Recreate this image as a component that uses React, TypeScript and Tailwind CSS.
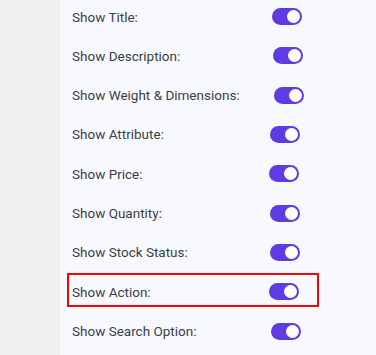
const rows = [
  { label: 'Show Title:', offset: 'ml-[3px]' },
  { label: 'Show Description:', offset: 'ml-[4px]' },
  { label: 'Show Weight & Dimensions:', offset: 'ml-[5px]' },
  { label: 'Show Attribute:', offset: 'ml-[1px]' },
  { label: 'Show Price:', offset: 'ml-0' },
  { label: 'Show Quantity:', offset: 'ml-[1px]' },
  { label: 'Show Stock Status:', offset: 'ml-[1px]' },
  { label: 'Show Action:', offset: 'ml-0', highlight: true },
  { label: 'Show Search Option:', offset: 'ml-[2px]' },
];

function Toggle({ className }: { className: string }) {
  return (
    <span className={`flex h-[17px] w-[30px] items-center justify-end rounded-full bg-[#5f3be2] pr-[2px] ${className}`}>
      <span className="h-[13px] w-[13px] rounded-full bg-white" />
    </span>
  );
}

export default function App() {
  return (
    <div className="flex h-[355px] w-[376px] overflow-hidden bg-[#f8f9ff] font-['Roboto',sans-serif]">
      <div className="w-[60px] shrink-0 bg-[#f0f0f1]" />
      <div className="mt-[-3px] flex flex-1 flex-col pl-3">
        {rows.map((row) => (
          <div key={row.label} className="relative flex h-[39.3px] shrink-0 items-center">
            {row.highlight && (
              <div className="absolute left-[-5px] top-[1px] h-[34px] w-[252px] border-2 border-[#ff0000]" />
            )}
            <span className="w-[197px] text-[13.5px] text-[#3a3f47]">{row.label}</span>
            <Toggle className={row.offset} />
          </div>
        ))}
      </div>
    </div>
  );
}
